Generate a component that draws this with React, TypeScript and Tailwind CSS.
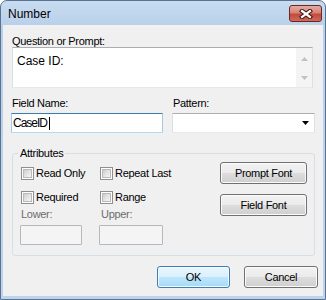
import React from "react";

function Checkbox({ label }: { label: string }) {
  return (
    <div className="flex h-[13px] items-center gap-[2px]">
      <span className="ml-[1px] flex h-[13px] w-[13px] shrink-0 items-center justify-center border border-[#8e8f8f] bg-white">
        <span className="h-[9px] w-[9px] border border-[#b9b9b9] bg-[linear-gradient(135deg,#cfcfcf,#f7f7f7)]" />
      </span>
      <span className="leading-[13px]">{label}</span>
    </div>
  );
}

function WinButton({
  children,
  width,
  isDefault = false,
}: {
  children: React.ReactNode;
  width: string;
  isDefault?: boolean;
}) {
  return (
    <button
      className={
        isDefault
          ? `${width} h-[22px] rounded-[3px] border border-[#3c7fb1] bg-[linear-gradient(to_bottom,#eaf6fd_0%,#d9f0fc_50%,#bee6fd_50%,#a7d9f5_100%)] shadow-[inset_0_0_0_1px_#f4fbff] leading-[13px]`
          : `${width} h-[22px] rounded-[3px] border border-[#707070] bg-[linear-gradient(to_bottom,#f2f2f2_0%,#ebebeb_50%,#dddddd_50%,#cfcfcf_100%)] shadow-[inset_0_0_0_1px_#fbfbfb] leading-[13px]`
      }
    >
      {children}
    </button>
  );
}

export default function App() {
  return (
    <div className="h-[300px] w-[326px] bg-white font-['Liberation_Sans',Arial,sans-serif] text-[11px] tracking-[-0.3px] text-black">
      <div className="flex h-full w-full flex-col rounded-t-[7px] border border-[#5a7394] bg-[linear-gradient(to_bottom,#c9dcf0,#b9d0ea_24px,#bdd4ec)]">
        {/* title bar */}
        <div className="flex h-[24px] shrink-0 items-start justify-between pl-[7px] pr-[3px]">
          <span className="mt-[6px] text-[12px] leading-[14px] tracking-normal">Number</span>
          <div className="mt-[4px] flex h-[17px] w-[33px] items-center justify-center rounded-[3px] border border-[#6a2720] bg-[linear-gradient(to_bottom,#e4aba2_0%,#d68377_45%,#c5493b_55%,#cf6a5c_100%)]">
            <svg width="14" height="10" viewBox="0 0 14 10">
              <path d="M3 2 L11 8 M11 2 L3 8" stroke="#41140f" strokeWidth="4.2" strokeLinecap="square" />
              <path d="M3 2 L11 8 M11 2 L3 8" stroke="#ffffff" strokeWidth="2.2" strokeLinecap="square" />
            </svg>
          </div>
        </div>

        {/* client area */}
        <div className="mx-[2px] mb-[3px] flex flex-1 flex-col bg-[#f0f0f0]">
          <div className="ml-[9px] mt-[10px] h-[12px] leading-[12px]">Question or Prompt:</div>
          <div className="ml-[9px] flex h-[41px] w-[301px] border border-[#abadb3] border-b-[#e3e9ef] border-l-[#dbdfe6] border-r-[#dbdfe6] bg-white">
            <div className="flex-1 pl-[4px] pt-[6px] text-[12px] leading-[15px] tracking-normal">Case ID:</div>
            <div className="flex w-[16px] flex-col items-center bg-[#f4f4f4] pb-[7px] pt-[9px]">
              <svg width="7" height="4" viewBox="0 0 7 4">
                <path d="M0 4 L3.5 0 L7 4 Z" fill="#c2c2c2" />
              </svg>
              <div className="flex-1" />
              <svg width="7" height="4" viewBox="0 0 7 4">
                <path d="M0 0 L7 0 L3.5 4 Z" fill="#c2c2c2" />
              </svg>
            </div>
          </div>

          <div className="ml-[8px] mt-[9px] flex gap-[9px]">
            <div className="flex w-[152px] flex-col">
              <div className="ml-[1px] h-[12px] leading-[12px]">Field Name:</div>
              <div className="mt-[4px] flex h-[20px] items-center rounded-[1px] border border-[#3d7bad] border-b-[#b7d9ed] border-l-[#a4c9e3] border-r-[#a4c9e3] bg-white pl-[1px]">
                <span className="text-[12px] leading-[14px] tracking-[-1px]">CaseID</span>
                <span className="ml-[2px] h-[13px] w-[1px] bg-black" />
              </div>
            </div>
            <div className="flex w-[143px] flex-col">
              <div className="ml-[1px] h-[12px] leading-[12px]">Pattern:</div>
              <div className="mt-[4px] flex h-[20px] items-center justify-end rounded-[1px] border border-[#abadb3] border-b-[#e3e9ef] border-l-[#dbdfe6] border-r-[#dbdfe6] bg-white pr-[5px]">
                <svg width="7" height="4" viewBox="0 0 7 4">
                  <path d="M0 0 L7 0 L3.5 4 Z" fill="#000" />
                </svg>
              </div>
            </div>
          </div>

          <fieldset className="ml-[9px] mt-[14px] h-[109px] w-[303px] rounded-[3px] border border-[#d5dfe5] px-0 pb-0 pt-0">
            <legend className="ml-[5px] h-[12px] px-[2px] leading-[12px]">Attributes</legend>
            <div className="flex">
              <div className="flex flex-col pl-[7px]">
                <div className="mt-[8px] flex">
                  <div className="w-[79px]">
                    <Checkbox label="Read Only" />
                  </div>
                  <Checkbox label="Repeat Last" />
                </div>
                <div className="mt-[11px] flex">
                  <div className="w-[79px]">
                    <Checkbox label="Required" />
                  </div>
                  <Checkbox label="Range" />
                </div>
                <div className="mt-[4px] flex text-[#6d6d6d]">
                  <div className="ml-[1px] h-[12px] w-[79px] leading-[12px]">Lower:</div>
                  <div className="ml-[1px] h-[12px] leading-[12px]">Upper:</div>
                </div>
                <div className="mt-[5px] flex">
                  <div className="w-[79px]">
                    <div className="h-[20px] w-[62px] rounded-[1px] border border-[#b5b8bd] bg-[#f4f4f4]" />
                  </div>
                  <div className="h-[20px] w-[64px] rounded-[1px] border border-[#b5b8bd] bg-[#f4f4f4]" />
                </div>
              </div>
              <div className="ml-auto mr-[7px] flex flex-col gap-[10px] pt-[3px]">
                <WinButton width="w-[87px]">Prompt Font</WinButton>
                <WinButton width="w-[87px]">Field Font</WinButton>
              </div>
            </div>
          </fieldset>

          <div className="mt-[10px] flex justify-end gap-[14px] pr-[5px]">
            <WinButton width="w-[73px]" isDefault>
              OK
            </WinButton>
            <WinButton width="w-[74px]">Cancel</WinButton>
          </div>
        </div>
      </div>
    </div>
  );
}
